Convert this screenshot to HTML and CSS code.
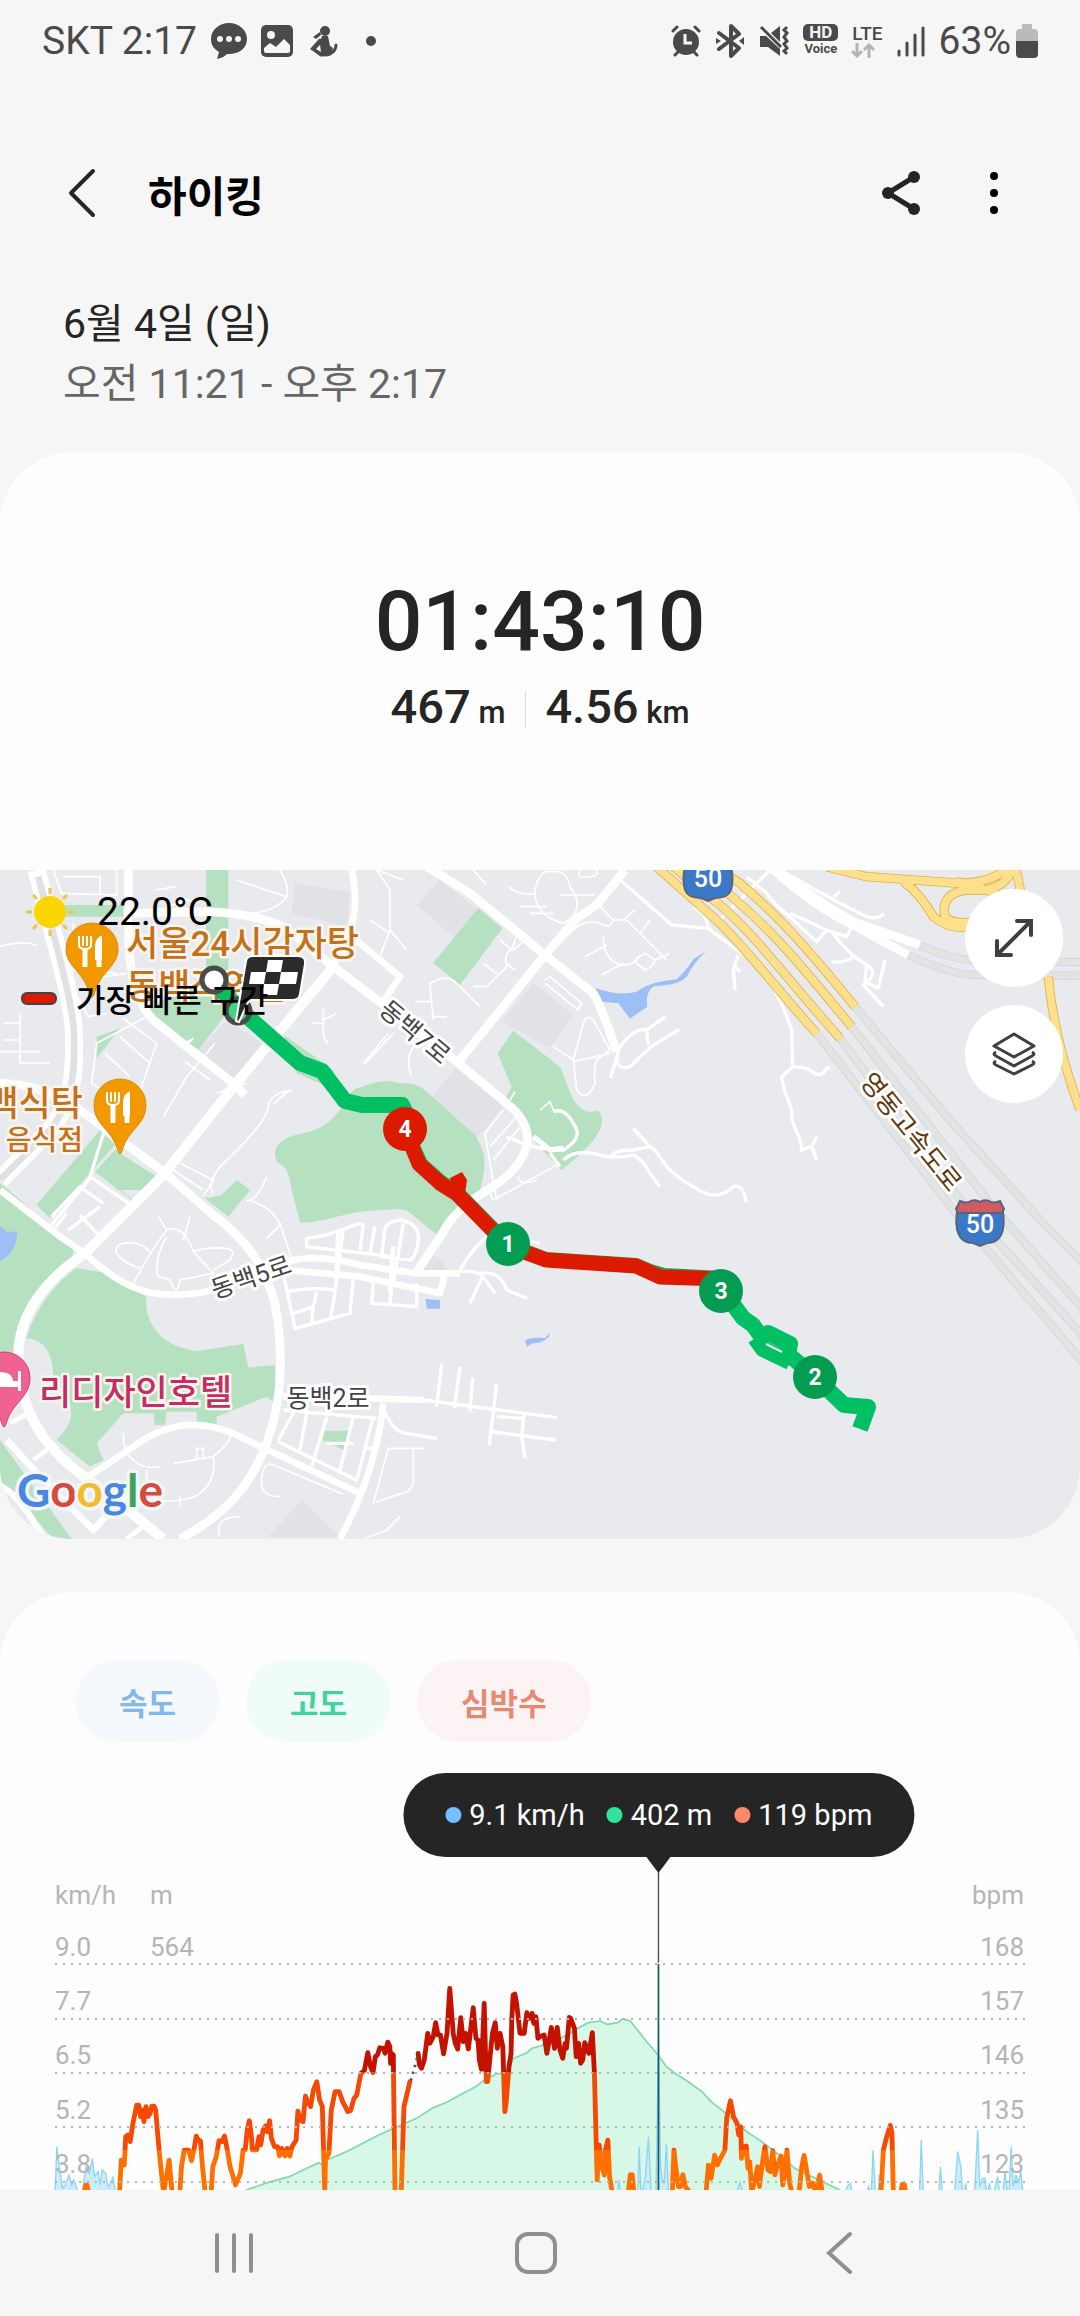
FILE: index.html
```
<!DOCTYPE html>
<html lang="ko">
<head>
<meta charset="UTF-8">
<meta name="viewport" content="width=device-width, initial-scale=1.0">
<title>하이킹</title>
<link rel="stylesheet" href="styles.css">
</head>
<body>
<div class="status-bar">
    <div class="status-left">
        <span class="status-text">SKT 2:17</span>
        <svg width="36" height="38" viewBox="0 0 36 38"><path fill="#4a4a4a" d="M18 1C8 1 0 8 0 17c0 6 3 10 8 13l-2 7c5-1 8-3 10-5h2c10 0 18-6 18-15S28 1 18 1z"/><g fill="#f6f6f6"><circle cx="9" cy="17" r="3"/><circle cx="18" cy="17" r="3"/><circle cx="27" cy="17" r="3"/></g></svg>
        <svg width="32" height="32" viewBox="0 0 32 32"><rect width="32" height="32" rx="5" fill="#4a4a4a"/><circle cx="10" cy="10" r="4" fill="#f6f6f6"/><path fill="#f6f6f6" d="M3 23l6-5 6 4 8-8 6 6v6q0 2-2 2H5q-2 0-2-2z"/></svg>
        <svg class="icon-person" width="28" height="32" viewBox="0 0 28 32"><g fill="#4a4a4a"><circle cx="15" cy="6" r="5"/><path d="M3 12l7-5 1 3-5 4zM12 11h6l2 10 3 2-2 7q-7 3-12 0l-7-5 9-11z"/></g><path d="M2 24l8-9M3 24l8 6M20 29q6-3 6-9" fill="none" stroke="#4a4a4a" stroke-width="3" stroke-linecap="round"/><path fill="#f6f6f6" d="M6 24l4-4 1 7z"/></svg>
        <span class="status-dot"></span>
    </div>
    <div class="status-right">
        <svg width="30" height="32" viewBox="0 0 30 32"><circle cx="15" cy="17" r="13" fill="#4a4a4a"/><path d="M2 6l4-4M28 6l-4-4M4 30l4-4M26 30l-4-4" stroke="#4a4a4a" stroke-width="3" stroke-linecap="round"/><path d="M14 9v9h7" fill="none" stroke="#f6f6f6" stroke-width="3"/></svg>
        <svg width="30" height="34" viewBox="0 0 30 34"><path d="M4 9l20 15-8 8V2l8 8L4 25" fill="none" stroke="#4a4a4a" stroke-width="4" stroke-linejoin="round" stroke-linecap="round"/><path fill="#4a4a4a" d="M1 14l5 3-5 3zM29 13l-5 4 5 4z"/></svg>
        <svg width="30" height="32" viewBox="0 0 30 32"><path fill="#4a4a4a" d="M1 11h6l14 13v7L9 22H1zM12 8l9-7v16z"/><path d="M2 2l20 20M28 2l-3 3 3 3-3 4 3 4-3 3 3 4-3 3 3 3" fill="none" stroke="#4a4a4a" stroke-width="3"/></svg>
        <span class="hd-voice"><b>HD</b><i>Voice</i></span>
        <span class="lte">LTE<svg width="24" height="15" viewBox="0 0 24 15"><path d="M6 0v13M1 8l5 5 5-5M18 15V2M13 7l5-5 5 5" fill="none" stroke="#b4b4b4" stroke-width="3"/></svg></span>
        <svg width="28" height="31" viewBox="0 0 28 31"><path d="M2 25v4M10 17v12M18 9v20M26 2v27" stroke="#4a4a4a" stroke-width="3" stroke-linecap="round"/></svg>
        <span class="status-text">63%</span>
        <svg width="22" height="34" viewBox="0 0 22 34"><path fill="#bababa" d="M7 0h8q1 0 1 1v4h2q4 0 4 4v8H0V9q0-4 4-4h2V1q0-1 1-1z"/><path fill="#4a4a4a" d="M0 17h22v13q0 4-4 4H4q-4 0-4-4z"/></svg>
    </div>
</div>

<header class="app-bar">
    <button class="icon-btn" aria-label="뒤로">
        <svg width="28" height="50" viewBox="0 0 28 50"><path d="M25 3L3 25l22 22" fill="none" stroke="#252525" stroke-width="4" stroke-linecap="round" stroke-linejoin="round"/></svg>
    </button>
    <h1>하이킹</h1>
    <button class="icon-btn share" aria-label="공유">
        <svg width="38" height="44" viewBox="0 0 38 44"><path d="M32 6L6 22l26 16" fill="none" stroke="#252525" stroke-width="5"/><g fill="#252525"><circle cx="32" cy="6" r="6"/><circle cx="6" cy="22" r="6"/><circle cx="32" cy="38" r="6"/></g></svg>
    </button>
    <button class="icon-btn" aria-label="더보기">
        <svg width="10" height="44" viewBox="0 0 10 44"><circle cx="5" cy="5" r="4"/><circle cx="5" cy="22" r="4"/><circle cx="5" cy="39" r="4"/></svg>
    </button>
</header>

<div class="date">
    <p>6월 4일 (일)</p>
    <p class="time-range">오전 11:21 - 오후 2:17</p>
</div>

<section class="card">
    <div class="summary">
        <div class="duration">01:43:10</div>
        <div class="stats">
            <div>467<small> m</small></div>
            <div>4.56<small> km</small></div>
        </div>
    </div>

    <div class="map">
        <svg class="map-canvas" viewBox="0 0 1080 669">
            <svg width="1080" height="669" viewBox="0 0 3240 2007">
                <rect width="3240" height="2007" fill="#e8eaed"/>
                <!-- blocks -->
                <path fill="#e0e2e6" d="M1320 30L1250 105L1365 205L1435 120zM1600 340L1720 435L1650 535L1505 455zM1365 595L1515 705L1425 810L1285 695zM885 40L1050 65L1040 170L875 130zM680 450L800 530L700 630L595 540zM905 1890L1020 2000L805 2000zM1290 1150q50 20 50 70l-90-10z"/>
                <!-- parks -->
                <g fill="#b5e1c1">
                    <path d="M618 0H685V330L640 360L618 300zM180 105H370V140H190zM440 420L560 350L680 360V430L595 540L500 480zM290 500L360 475L290 565z"/>
                    <path d="M850 495L930 550L1000 600L1030 680L960 640L890 610z"/>
                    <path d="M1200 640C1150 625 1120 640 1085 650C1040 660 1050 690 1020 720C960 800 900 780 850 810C820 830 820 860 835 880C860 890 868 910 875 960L900 1058C960 1060 1020 1030 1110 1022C1160 1020 1210 1010 1230 1028L1308 1092L1440 965C1460 880 1460 850 1425 795L1280 665C1250 640 1230 640 1200 640z"/>
                    <path d="M300 780L345 825L150 1045L110 1005zM345 840L470 920L395 990L285 905zM360 960L400 990L440 960zM625 985L665 975L710 930L750 960L685 1040L610 980z"/>
                    <path d="M0 940L50 980L220 1140L215 1185L100 1290L50 1400L40 1500H0z"/>
                    <path d="M230 1195L330 1210L440 1280C430 1340 470 1430 590 1443L730 1422L745 1493L825 1485V1600L800 1580L650 1640V1665H590V1625H500L495 1665H465L460 1630H370L290 1720L310 1770L270 1790L170 1710C230 1650 230 1600 160 1530C160 1460 140 1410 80 1405C100 1330 160 1240 230 1195z"/>
                    <path d="M0 1710L130 1890L215 2007H160L0 1830zM975 1682H1045L1035 1742L968 1710z"/>
                    <path d="M1435 115L1507 175L1380 345L1300 278zM1540 482L1680 590L1720 690Q1745 725 1770 727Q1810 710 1805 760Q1800 810 1685 900L1590 800L1510 700L1535 650L1493 550z"/>
                </g>
                <!-- water -->
                <g fill="#9dbff6">
                    <path d="M1785 354Q1860 380 1910 365Q1950 335 2030 328Q2060 300 2080 268L2118 244Q2080 280 2062 318Q2040 345 1965 348Q1935 360 1942 410L1890 446L1855 400L1805 395zM0 1068L20 1085H52C50 1130 30 1160 0 1172z"/>
                    <path d="M1277 1287L1320 1290V1316H1280zM1575 1412q15-12 60-8l14-14l-2 10q-20 20-50 20l-16 10z"/>
                </g>
                <!-- small streets -->
                <g fill="none" stroke="#fff" stroke-width="5">
                    <path d="M160 0L185 70L350 75V0M190 20H300V75M220 160V300L350 310M250 330L380 310M210 340L265 440L320 430M0 230Q60 210 110 225M10 460H60V510H10M60 430V580M0 545H120M60 580H150"/>
                    <path d="M440 440L290 520L275 640L400 720L470 520L370 445M315 550L390 620M360 500L450 580M490 740L560 620L645 520M555 575L630 630M555 520L580 505L560 525"/>
                    <path d="M650 670L740 640M820 700L870 660M875 660Q810 670 805 710Q800 760 660 890Q620 940 640 970M540 880L640 930L610 980M520 900L610 960M800 920Q770 990 750 990M740 990Q830 1010 850 1090L880 1180M800 1105L845 1060M1090 580L1165 490M970 410V480Q970 510 985 520M935 460H970M970 450L1010 430"/>
                    <path d="M710 30L860 80Q870 50 840 0M860 80Q830 120 760 130M465 60L530 50M500 110L570 90L530 80M1130 0L1170 60V180L1140 260M1170 180L1220 240M1110 150L1170 190M1130 0L1210 30M1420 0L1460 45M1525 50Q1560 80 1610 70M1560 110H1640M1590 130H1660"/>
                    <path d="M1620 20Q1600 50 1607 90Q1620 140 1690 160L1715 145Q1750 100 1710 50Q1700 0 1660 5Q1630 0 1620 20M1740 0Q1730 30 1760 20Q1800 20 1790 0M1680 75H1785M1700 200Q1750 140 1800 160Q1830 180 1840 150L1800 110M1840 150H1880L2000 270M1810 200Q1810 260 1850 280Q1880 295 1910 270M1920 190L1950 150M1755 260L1820 225M1805 315L1870 280M1910 265L1935 250L1965 270L1955 290L1935 300L1910 280zM1965 270L2010 250M1870 150L1905 120"/>
                    <path d="M1555 180L1535 240Q1510 250 1520 290Q1480 330 1460 350H1420M1535 240L1500 210M1450 280L1490 310M1520 280L1545 300M1540 240L1570 215M1300 450Q1290 360 1290 340Q1340 310 1370 340L1440 410M1300 450V440L1340 440M1245 395H1290M1250 520Q1210 560 1235 620M1095 580L1180 490M1635 330L1650 320L1745 400L1735 420L1635 340M1660 530L1720 570L1750 460Q1760 430 1780 450L1830 540L1790 570Q1780 600 1785 640Q1760 700 1730 660L1720 570M1720 575L1830 550"/>
                    <path d="M1620 720L1650 695L1660 720L1680 725M1510 720L1455 790L1480 940L1490 990M1550 740L1470 830M1560 770L1480 870M1480 940Q1460 960 1480 990L1680 880M1555 920Q1560 950 1610 930M1530 690L1545 665"/>
                    <path d="M475 1040L500 1080Q550 1060 580 1145L640 1210L540 1230Q530 1290 510 1230L475 1220Q460 1170 500 1100M500 1080Q460 1130 400 1240M455 1150Q420 1110 370 1120Q340 1130 350 1150Q370 1180 420 1195M580 1145Q620 1130 680 1135Q710 1140 690 1170L640 1200M550 1110L570 1040"/>
                    <path d="M370 1690Q370 1750 400 1770Q430 1800 480 1790M440 1800V1880M520 1780L640 1760Q650 1830 600 1870Q560 1900 440 1890M590 1770V1735H610V1765M640 1760Q690 1720 700 1680M540 1880V1910M840 1880Q780 1880 785 1830Q790 1770 820 1785L1030 1873M660 2000Q640 1940 720 1940M1120 1900L1165 1735H1275M1240 1735V1840Q1240 1850 1220 1865L1130 1895M1090 2007L1160 1980L1200 1940"/>
                </g>
                <g fill="none" stroke="#fff" stroke-width="10">
                    <path d="M155 1040L240 950L310 1000M240 1035L300 1100M205 1080L300 1010M320 760L270 920L400 1010M160 1080L200 1030M270 925L150 1070"/>
                    <path d="M1180 1160L920 1130V1105L980 1095L1080 1060L1090 1065L1080 1140M1110 1150L1125 1070M1145 1155L1155 1075Q1160 1055 1200 1050Q1260 1060 1255 1110Q1250 1160 1230 1170L1140 1160M1030 1080L1000 1300L990 1350M850 1210L885 1375L1050 1330L1060 1220M860 1265Q930 1250 1000 1260M880 1330L940 1310L935 1360M950 1265L940 1310M1120 1240L1115 1300L1250 1310V1240M1175 1250L1170 1300M1210 1060L1180 1240"/>
                    <path d="M1380 1200Q1420 1130 1470 1090L1620 1120M1380 1205Q1430 1200 1450 1220L1485 1270M1450 1215L1410 1300M1440 1210Q1500 1200 1520 1260L1580 1285"/>
                    <path d="M880 1630L835 1710M850 1620L1130 1645M920 1630L900 1740M980 1640L935 1790M1060 1640L1020 1800M835 1715L1070 1830L1120 1640M980 1720H1060M1100 1735H1130"/>
                    <path d="M1150 1615Q1180 1690 1220 1690L1310 1705M1310 1610L1325 1483M1363 1615L1380 1490M1410 1625L1418 1522M1490 1540L1468 1725M1270 1590L1672 1643M1474 1685L1668 1710M1572 1630L1565 1700L1575 1765M1490 1640L1575 1645"/>
                    <path d="M1855 545L1850 570Q1855 600 1890 590Q1930 550 1960 525L2038 478M1850 545Q1900 470 1940 480L1997 440M1940 480L1945 525M1850 560L1832 625M1690 870Q1720 840 1780 850Q1850 870 1900 855Q1930 870 1950 910L1980 950M1835 855Q1850 840 1900 840L1950 830Q1960 830 2000 890Q2040 930 2080 950Q2150 1000 2200 950Q2230 940 2238 995M1950 830L1900 775M1650 850L1680 890M1520 800Q1600 840 1690 840Q1740 810 1730 780Q1700 710 1660 725"/>
                    <path d="M1855 25L2015 165L2125 175L2225 250M2225 250C2280 280 2340 370 2375 480L2378 590L2345 620C2350 680 2380 700 2375 740C2380 780 2405 800 2405 840L2435 830L2450 800M2435 830L2450 872M2375 590Q2410 590 2430 600Q2460 630 2480 595L2490 592M2215 255L2200 300L2205 360M2205 290L2220 305M2160 150L2310 0M2240 20L2300 70Q2320 100 2380 150L2450 215L2480 180L2370 130M2480 180L2540 200L2555 170M2500 190Q2540 250 2600 285L2595 335L2635 355M2600 285Q2640 310 2590 345L2650 410M2635 355L2655 270M2495 275Q2540 280 2560 260M2125 175Q2120 130 2080 110"/>
                    <path d="M2340 0L2520 100L2600 140Q2640 150 2650 130M2500 80L2520 65"/>
                </g>
                <!-- main roads -->
                <g fill="none" stroke="#fff" stroke-width="26" stroke-linejoin="round">
                    <path stroke-width="54" d="M110 0C140 130 225 400 222 500C225 620 215 700 150 780L0 930"/>
                    <path stroke="#e0e1e3" stroke-width="20" d="M115 20C145 140 223 400 222 500C225 620 215 700 150 780L0 930"/>
                    <path d="M385 0V200C390 330 420 410 460 450L560 530L700 640L735 675M0 640Q120 640 240 720L490 905L640 1035C740 1110 790 1180 825 1300C850 1450 850 1580 800 1720C750 1850 680 1930 540 2007"/>
                    <path d="M1000 290L700 650L490 915L255 1150C120 1240 50 1350 55 1470C60 1600 110 1720 260 1825L390 1925L490 2007" stroke-width="30"/>
                    <path d="M400 130L620 125Q760 130 850 170L1000 290L1080 350L1370 575L1520 700Q1595 760 1580 830Q1560 900 1470 955Q1360 1020 1328 1090L1250 1205"/>
                    <path d="M1055 0Q1080 110 1045 190L1000 290M1045 190L1080 220L1200 320L1150 395" stroke-width="20"/>
                    <path d="M1250 -30L1410 70L1635 255L1780 370Q1800 400 1850 545M1875 0L1790 105L1730 145L1635 255L1380 570"/>
                    <path d="M0 960L180 1100L255 1150C380 1270 470 1290 620 1265Q760 1200 860 1175Q950 1150 1080 1185L1250 1210H1380M860 1200L1080 1220L1320 1270L1335 1210" stroke-width="20"/>
                    <path d="M20 1710L130 1830L280 1980L400 1850M250 1830L400 1730Q560 1610 740 1710L1080 1870M1150 1600Q1130 1800 1020 2007M0 1850Q60 1870 130 2007M850 1578L1270 1590" stroke-width="20"/>
                    <path d="M100 1770L140 1740M30 1660L75 1635M380 2007L440 1960M1015 1080L1010 1230M1180 1130L1170 1270" stroke-width="14"/>
                    <path d="M1600 800L1650 840L1690 835" stroke-width="16"/>
                    <path d="M2310 -20Q2440 90 2560 155L2760 225M2310 -10Q2440 110 2560 165Q2640 210 2725 255"/>
                </g>
                <!-- expressways and tunnels -->
                <g fill="none">
                    <g stroke="#cfd2d2" stroke-width="24">
                        <path d="M2760 225Q2840 265 2930 272L3240 276M2725 255Q2840 310 2920 315L3240 317M2565 410L2840 740L3130 1060L3260 1190M2555 470L2970 1000L3260 1330M2520 505L2890 1000L3260 1410M2450 490L2860 1020L3260 1490"/>
                    </g>
                    <g stroke="#e2e3e3" stroke-width="20">
                        <path d="M2760 225Q2840 265 2930 272L3240 276M2725 255Q2840 310 2920 315L3240 317M2565 410L2840 740L3130 1060L3260 1190M2555 470L2970 1000L3260 1330M2520 505L2890 1000L3260 1410M2450 490L2860 1020L3260 1490"/>
                    </g>
                    <g stroke="#e0b04c" stroke-width="28">
                        <path d="M2130 -20L2220 40C2300 110 2370 170 2565 410M2090 -10L2190 75C2300 170 2350 220 2555 470M2020 -10L2160 105C2270 200 2330 290 2520 505M1970 -10L2160 160C2260 260 2340 370 2450 490"/>
                        <path d="M2480 -10L2600 20L2880 40Q2960 40 3020 0M3035 0Q3010 70 2900 60Q2820 70 2835 140Q2860 165 2920 155M2710 35Q2760 70 2800 140Q2850 180 2900 170M3045 -10Q3060 40 3065 100M3145 320Q3160 500 3240 720M2870 35Q2950 50 3000 80"/>
                    </g>
                    <g stroke="#fde08b" stroke-width="23">
                        <path d="M2130 -20L2220 40C2300 110 2370 170 2565 410M2090 -10L2190 75C2300 170 2350 220 2555 470M2020 -10L2160 105C2270 200 2330 290 2520 505M1970 -10L2160 160C2260 260 2340 370 2450 490"/>
                        <path d="M2480 -10L2600 20L2880 40Q2960 40 3020 0M3035 0Q3010 70 2900 60Q2820 70 2835 140Q2860 165 2920 155M2710 35Q2760 70 2800 140Q2850 180 2900 170M3045 -10Q3060 40 3065 100M3145 320Q3160 500 3240 720M2870 35Q2950 50 3000 80"/>
                    </g>
                </g>
            </svg>

            <g class="pin-label food">
                <text x="126" y="86">서울24시감자탕</text>
                <text x="126" y="129">동백직영점</text>
                <text x="83" y="246" text-anchor="end">동백식탁</text>
                <text class="pin-sub" x="83" y="280" text-anchor="end">· 음식점</text>
            </g>
            <text class="pin-label hotel" x="39" y="535">리디자인호텔</text>
            <g class="road-label">
                <text transform="translate(415 162) rotate(40)" y="9">동백7로</text>
                <text transform="translate(251 407) rotate(-19)" y="9">동백5로</text>
                <text transform="translate(328 528)" y="9">동백2로</text>
                <text class="highway-label" transform="translate(911 262) rotate(51)" y="9">영동고속도로</text>
            </g>

            <!-- place pins -->
            <g stroke="#d98a10" stroke-width="1" fill="#f29900">
                <path d="M92 53a26 26 0 0 1 26 26c0 18-18 22-24 46q-2 4-4 0c-6-24-24-28-24-46a26 26 0 0 1 26-26z"/>
                <path d="M120 209a26 26 0 0 1 26 26c0 20-18 24-24 46q-2 6-4 0c-6-22-24-26-24-46a26 26 0 0 1 26-26z"/>
                <path fill="#f06292" stroke="#cf4577" d="M4 482a26 26 0 0 1 26 26c0 20-18 24-24 46q-2 6-4 0c-6-22-24-26-24-46a26 26 0 0 1 26-26z"/>
            </g>
            <g fill="none" stroke="#fff" stroke-width="2">
                <path d="M79 66v9q0 4 6 4t6-4v-9M83 66v10M87 66v10"/><path stroke-width="5" d="M85 78v19M99 88v9"/><path fill="#fff" d="M101 67v22h-5V75q1-6 5-8z"/>
                <path d="M107 222v9q0 4 6 4t6-4v-9M111 222v10M115 222v10"/><path stroke-width="5" d="M113 234v19M127 244v9"/><path fill="#fff" d="M129 223v22h-5v-14q1-6 5-8z"/>
                <path fill="#fff" d="M0 503q12 0 12 9h7v-10h1v18h-1v-4H0z"/>
            </g>

            <!-- shields -->
            <g stroke="#56657d" stroke-width="2">
                <path fill="#3c78c8" d="M685-4h46q3 14 0 24-3 8-16 8l-7 3-7-3q-13 0-16-8-3-10 0-24z"/>
                <path fill="#3c78c8" d="M958 337h44q4 18-1 28-4 8-14 8l-7 3-7-3q-10 0-14-8-5-10-1-28z"/>
                <path fill="#cf5b64" d="M960 331q6 3 11 0 5-2 9 1 4-3 9-1 5 3 11 0l4 8-2 4h-44l-2-4z"/>
            </g>
            <g class="shield-text">
                <text x="708" y="17">50</text>
                <text x="980" y="363">50</text>
            </g>

            <!-- route -->
            <g fill="none" stroke="#00c063" stroke-width="16" stroke-linejoin="round">
                <path d="M216 114L240 140L300 193L322 201L345 231L362 235L402 235L408 247"/>
                <path d="M721 421L735 437L743 448L753 455L760 465M815 507L844 535L868 537L860 559"/>
                <path d="M755 468L768 463L790 474L788 484L815 507M755 468L763 479L790 492"/>
                <path stroke="#2a9a45" stroke-width="14" d="M405 258L421 294L441 312L458 323L509 375L546 389L636 395L650 401L664 405L721 408"/>
                <path stroke="#dc1a00" stroke-width="15" d="M405 260L419 294L441 314L457 324L508 376L546 390L636 396L660 407L721 409"/>
            </g>
            <path fill="#dc1a00" d="M450 308l12-6 5 8-2 14-10 2z"/>
            <path d="M766 474L782 482" stroke="#e8eaed" stroke-width="2"/>
            <g fill="#fff" stroke="#4a4a4a" stroke-width="5">
                <circle cx="214" cy="110" r="12"/>
                <circle cx="238" cy="141" r="12" fill="#3fd488"/>
            </g>
            <path fill="#2b2b2b" stroke="#fff" stroke-width="2" d="M253 86h45q8 0 7 8l-5 30q-1 6-7 6h-44l-10 22-3-1 10-60q1-5 7-5z"/>
            <path fill="#fff" d="M268 90h15l-2 12h-15zM251 102h15l-2 12h-15zM281 102h17l-2 12h-17zM264 114h15l-2 11h-15z"/>
            <circle class="km fast" cx="405" cy="259" r="22"/>
            <circle class="km" cx="508" cy="374" r="22"/>
            <circle class="km" cx="721" cy="421" r="22"/>
            <circle class="km" cx="815" cy="507" r="22"/>
            <g class="km-text">
                <text x="405" y="267">4</text>
                <text x="508" y="382">1</text>
                <text x="721" y="429">3</text>
                <text x="815" y="515">2</text>
            </g>

            <text class="google" x="17" y="637"><tspan fill="#4a87e0">G</tspan><tspan fill="#d64b3f">o</tspan><tspan fill="#f2bd2b">o</tspan><tspan fill="#4a87e0">g</tspan><tspan fill="#3fa35b">l</tspan><tspan fill="#d64b3f">e</tspan></text>
        </svg>

        <div class="map-info">
            <div class="weather">
                <svg width="50" height="50" viewBox="0 0 50 50"><path d="M25 1v6M25 43v6M1 25h6M43 25h6M8 8l4 4M38 38l4 4M8 42l4-4M38 12l4-4" stroke="#e9c54a" stroke-width="3"/><circle cx="25" cy="25" r="16" fill="#fbd500"/></svg>
                <span>22.0°C</span>
            </div>
            <div class="legend"><span class="legend-bar"></span>가장 빠른 구간</div>
        </div>

        <div class="map-buttons">
            <button aria-label="확대">
                <svg width="40" height="40" viewBox="0 0 40 40"><path d="M3 37L37 3M23 3h14v14M3 23v14h14" fill="none" stroke="#3f3f3f" stroke-width="4" stroke-linecap="round"/></svg>
            </button>
            <button aria-label="지도 유형">
                <svg width="44" height="44" viewBox="0 0 44 44"><path d="M22 2l20 12-20 11L2 14zM4 20q-4 2 0 4l18 10 18-10q4-2 0-4M4 29q-4 2 0 4l18 9 18-9q4-2 0-4" fill="none" stroke="#3f3f3f" stroke-width="3" stroke-linejoin="round"/></svg>
            </button>
        </div>
    </div>
</section>

<section class="card chart-card">
    <div class="chips">
        <button class="chip speed">속도</button>
        <button class="chip altitude">고도</button>
        <button class="chip heart">심박수</button>
    </div>

    <div class="chart">
        <svg class="chart-canvas" viewBox="0 0 1080 417">
            <defs>
                <linearGradient id="zones" gradientUnits="userSpaceOnUse" x1="0" y1="0" x2="0" y2="1000">
                    <stop offset="0.457" stop-color="#c41200"/>
                    <stop offset="0.457" stop-color="#f24a08"/>
                    <stop offset="0.69" stop-color="#f84800"/>
                    <stop offset="0.69" stop-color="#ff7000"/>
                </linearGradient>
            </defs>
            <svg width="1080" height="417" viewBox="0 -441 3136 1251" preserveAspectRatio="none">
                <!-- altitude -->
                <path fill="#d7f8e6" stroke="#7fd9ae" stroke-width="5" d="M700 820L715 810L780 787L840 770L925 728L935 735L950 720L1010 693L1100 645L1150 622L1180 608L1210 595L1255 565L1300 545L1330 528L1385 498L1400 485L1440 462L1455 460L1480 440L1490 415L1510 407L1530 398L1545 385L1568 378L1600 365L1628 355L1678 325L1708 308L1743 303L1763 313L1793 308L1808 297L1830 303L1878 365L1913 408L1935 440L1963 462L1998 485L2038 515L2068 548L2108 580L2168 635L2208 662L2268 710L2308 745L2368 775L2438 810L2450 820z"/>
                <!-- speed -->
                <g fill="#c9edfb" stroke="#90d6f3" stroke-width="4">
                    <path d="M160 820L165 680L172 740L175 760L182 805L190 795L200 765L208 795L214 780L222 800L225 820zM238 820L250 740L260 760L268 715L275 770L285 755L291 795L297 750L307 760L312 795L316 800L322 785L328 772L336 820z"/>
                    <path d="M1793 820L1797 780L1801 820zM1852 820L1856 680L1861 820zM1865 820L1874 770L1883 650L1891 820zM1905 820L1912 350L1918 740L1924 790L1930 775L1935 670L1941 820zM2138 820L2148 787L2157 820zM2454 820L2460 800L2464 795L2470 790L2474 820zM2516 820L2522 800L2528 820zM2530 820L2535 690L2542 820zM2550 820L2553 765L2557 820zM2670 820L2675 660L2681 820zM2726 820L2731 740L2736 820zM2772 820L2781 695L2790 740L2795 820zM2800 820L2804 790L2808 820zM2830 820L2839 630L2845 800L2852 775L2860 775L2865 820zM2868 820L2873 790L2878 820zM2885 820L2897 770L2902 820zM2912 820L2918 755L2926 820zM2930 820L2936 680L2942 800L2950 765L2957 790L2964 755L2970 820z"/>
                </g>
                <!-- heart rate -->
                <g fill="none" stroke="url(#zones)" stroke-width="14" stroke-linejoin="round" stroke-linecap="round">
                    <path d="M245 820L249 795H253L257 820M347 820L352 720L361 735L365 650L372 645L378 665L386 610L397 555H403L408 590L413 570L418 605L424 560L430 590L436 580L441 558H447L452 570L462 690L475 820L485 760L491 720L500 820M522 820L527 740L535 690H548L556 722L563 690L570 648L576 660L582 662L588 740L596 820M613 820L618 740L628 710L636 662L645 665L652 648L660 690L668 740L684 795L698 760L706 690H712L718 630L724 602L729 640L733 690H745L752 650L757 675L764 630L771 618L776 635L783 602L788 655L797 680H806L812 708L818 685L828 708L834 685L842 708L848 680L860 660L865 573L872 600L880 605L887 528L893 545L902 560L910 510L920 485L928 540L936 560L943 820L945 720L955 700L962 570L973 515H985L995 545L1010 575L1018 572L1028 535L1036 525L1048 460L1058 452L1068 398L1076 440L1083 458L1090 410L1096 405L1103 383L1113 385L1118 400L1126 366L1132 380L1134 430L1137 400L1142 405L1147 820H1165L1173 560L1180 530L1190 485"/>
                    <path d="M1214 400L1218 435L1224 445L1232 420L1242 340L1248 370L1258 350L1265 308L1272 345H1279L1288 402L1298 340L1306 205L1316 340L1322 370L1329 387L1338 293L1345 365L1352 340L1360 387L1374 263L1382 355L1388 360L1392 420L1398 448L1406 250L1412 485H1416L1424 400L1430 340L1438 308L1444 385L1452 340L1460 380L1466 575L1470 545L1478 440L1484 400L1486 300L1490 225L1495 222L1500 250L1510 340H1522L1530 278L1537 295L1545 280L1550 310L1556 290L1562 355L1568 350L1580 345L1588 400L1601 322L1610 385L1618 322L1626 390L1634 415L1641 370L1645 385L1653 292L1657 295L1668 325L1673 410L1680 370L1686 430L1692 420L1698 368L1710 400L1720 338L1726 460L1734 780L1740 675L1748 740L1755 765L1758 690L1765 660L1770 770L1778 820"/>
                    <path d="M1824 820L1830 764H1836L1841 820M1952 820L1957 690L1962 740L1970 800H1976L1983 764L1990 800L2006 820M2050 820L2057 735L2065 775L2075 705L2083 735L2092 715L2105 690L2110 595L2121 542L2130 590L2140 610L2145 645L2151 620L2153 715L2160 680L2167 678L2172 745L2177 725L2183 820L2200 740L2205 800L2213 735L2221 680L2230 750L2237 755L2244 692L2250 765L2258 735L2268 708L2273 795L2279 760L2285 690L2293 790L2300 820M2320 820L2328 740L2335 706L2342 750L2350 800L2360 790L2370 820L2380 765L2388 820M2558 820L2565 690L2575 650L2585 616L2590 640L2594 820M2615 820L2620 793H2626L2630 820"/>
                </g>
                <path d="M1193 482L1215 400" stroke="#555" stroke-width="8" stroke-dasharray="7 14"/>
                <path d="M1912 132V820" stroke="#1b5866" stroke-width="5"/>
                <path d="M1912 -144V128" stroke="#4a4a4a" stroke-width="4"/>
            </svg>
            <path class="grid" d="M55 191H1025M55 246H1025M55 300H1025M55 354H1025M55 409H1025"/>
            <g class="axis">
                <text x="55" y="131">km/h</text>
                <text x="55" y="183">9.0</text>
                <text x="55" y="237">7.7</text>
                <text x="55" y="291">6.5</text>
                <text x="55" y="346">5.2</text>
                <text x="55" y="400">3.8</text>
                <text x="150" y="131">m</text>
                <text x="150" y="183">564</text>
            </g>
            <g class="axis axis-right">
                <text x="1024" y="131">bpm</text>
                <text x="1024" y="183">168</text>
                <text x="1024" y="237">157</text>
                <text x="1024" y="291">146</text>
                <text x="1024" y="346">135</text>
                <text x="1024" y="400">123</text>
            </g>
        </svg>
        <div class="tooltip">
            <span class="value speed">9.1 km/h</span>
            <span class="value altitude">402 m</span>
            <span class="value heart">119 bpm</span>
        </div>
    </div>
</section>

<nav class="nav-bar">
    <button aria-label="최근 앱">
        <svg width="40" height="42" viewBox="0 0 40 42"><path d="M3 3v36M20 3v36M37 3v36" stroke="#8f8f8f" stroke-width="4" stroke-linecap="round"/></svg>
    </button>
    <button aria-label="홈">
        <svg width="42" height="42" viewBox="0 0 42 42"><rect x="2" y="2" width="38" height="38" rx="11" fill="none" stroke="#8f8f8f" stroke-width="4"/></svg>
    </button>
    <button aria-label="뒤로">
        <svg width="26" height="44" viewBox="0 0 26 44"><path d="M24 3L3 22l21 19" fill="none" stroke="#8f8f8f" stroke-width="4" stroke-linecap="round"/></svg>
    </button>
</nav>
</body>
</html>
```
FILE: styles.css
```
* {
    box-sizing: border-box;
}
body {
    margin: 0;
    background-color: #f6f6f6;
    color: #252525;
    font-family: Roboto, "Noto Sans CJK KR", sans-serif;
}
button {
    border: none;
    padding: 0;
    background: none;
    font-family: inherit;
    cursor: pointer;
}
svg {
    flex: none;
}

/* status bar */
.status-bar {
    display: flex;
    justify-content: space-between;
    align-items: center;
    height: 82px;
    padding: 0 42px;
    color: #4a4a4a;
}
.status-left,
.status-right {
    display: flex;
    align-items: center;
    gap: 14px;
}
.status-text {
    font-size: 39px;
}
.icon-person {
    margin-left: 3px;
}
.status-dot {
    width: 10px;
    height: 10px;
    margin-left: 14px;
    border-radius: 50%;
    background-color: #4a4a4a;
}
.status-right svg:last-child {
    margin-left: -9px;
}
.hd-voice,
.lte {
    display: flex;
    flex-direction: column;
    align-items: center;
    height: 34px;
}
.hd-voice b {
    width: 35px;
    border-radius: 5px;
    background-color: #4a4a4a;
    color: #f6f6f6;
    font-size: 17px;
    line-height: 17px;
    text-align: center;
}
.hd-voice i {
    font-size: 13px;
    font-style: normal;
    font-weight: 700;
    line-height: 16px;
}
.lte {
    font-size: 19px;
    font-weight: 500;
    line-height: 19px;
}

/* app bar */
.app-bar {
    display: flex;
    align-items: center;
    height: 178px;
    margin-top: 22px;
    padding: 0 81px 0 68px;
}
.app-bar h1 {
    flex: 1;
    margin: 0 0 0 52px;
    color: #000;
    font-size: 42px;
    font-weight: 700;
}
.icon-btn {
    display: flex;
}
.share {
    margin-right: 69px;
}

.date {
    padding: 12px 63px 38px;
    font-size: 41px;
    line-height: 60px;
}
.date p {
    margin: 0;
}
.date .time-range {
    color: #666;
}

/* cards */
.card {
    overflow: hidden;
    border-radius: 72px;
    background-color: #fdfdfd;
}
.summary {
    padding: 120px 0 127px;
    font-weight: 500;
    text-align: center;
}
.duration {
    font-size: 84px;
    line-height: 100px;
}
.stats {
    display: flex;
    justify-content: center;
    margin-top: 5px;
    font-size: 47px;
    line-height: 60px;
}
.stats div {
    padding: 0 20px;
}
.stats div + div {
    background: linear-gradient(#dcdcdc, #dcdcdc) left center / 1px 38px no-repeat;
}
.stats small {
    font-size: 31px;
}

/* map */
.map {
    position: relative;
}
.map-canvas,
.chart-canvas {
    display: block;
    width: 100%;
}
.map text {
    font-family: Roboto, "Noto Sans CJK KR", sans-serif;
    paint-order: stroke;
    stroke-linejoin: round;
}
.pin-label {
    font-size: 35px;
    font-weight: 500;
    stroke: #fbf6f0;
    stroke-width: 5px;
}
.food {
    fill: #c5701b;
}
.hotel {
    fill: #c42e62;
}
.pin-sub {
    font-size: 28px;
}
.road-label {
    fill: #444;
    font-size: 25px;
    text-anchor: middle;
    stroke: #fff;
    stroke-width: 6px;
}
.highway-label {
    fill: #5f3509;
    font-size: 26px;
}
.shield-text {
    fill: #fff;
    font-size: 25px;
    font-weight: 500;
    text-anchor: middle;
}
.km {
    fill: #049c52;
}
.km.fast {
    fill: #dc1a00;
}
.km-text {
    fill: #fff;
    font-size: 23px;
    font-weight: 700;
    text-anchor: middle;
}
.map .google {
    font-family: Lato, sans-serif;
    font-size: 46px;
    font-weight: 700;
    stroke: #f3f5f7;
    stroke-width: 7px;
}
.map-info {
    position: absolute;
    top: 14px;
    left: 21px;
    color: #000;
}
.weather {
    display: flex;
    align-items: center;
    gap: 22px;
    height: 56px;
    margin-left: 4px;
    font-size: 39px;
}
.legend {
    display: flex;
    align-items: center;
    gap: 19px;
    height: 56px;
    margin-top: 30px;
    font-size: 32px;
    font-weight: 500;
}
.legend-bar {
    width: 36px;
    height: 13px;
    border: 2px solid #444;
    border-radius: 6px;
    background-color: #dc1a00;
}
.map-buttons {
    position: absolute;
    top: 19px;
    right: 17px;
    display: grid;
    gap: 18px;
}
.map-buttons button {
    display: flex;
    align-items: center;
    justify-content: center;
    width: 98px;
    height: 98px;
    border-radius: 50%;
    background-color: #fff;
}

/* chart */
.chart-card {
    margin-top: 53px;
    padding-top: 68px;
    border-radius: 72px 72px 0 0;
}
.chips {
    display: flex;
    gap: 26px;
    padding: 0 75px;
}
.chip {
    height: 82px;
    padding: 0 44px;
    border-radius: 41px;
    font-size: 31px;
    font-weight: 700;
}
.chip.speed {
    background-color: #f5f9fe;
    color: #80b9ea;
}
.chip.altitude {
    background-color: #f0fcf8;
    color: #42d29d;
}
.chip.heart {
    background-color: #fcf4f4;
    color: #e98870;
}
.chart {
    position: relative;
    margin-top: 31px;
}
.grid {
    fill: none;
    stroke: #b5b5b5;
    stroke-width: 2px;
    stroke-dasharray: 2 6;
}
.axis {
    fill: #b5b5b5;
    font-size: 26px;
}
.axis-right {
    text-anchor: end;
}
.tooltip {
    position: absolute;
    top: 0;
    left: 61%;
    display: flex;
    gap: 22px;
    height: 84px;
    padding: 0 42px;
    border-radius: 42px;
    background-color: #252525;
    color: #fff;
    font-size: 29px;
    line-height: 88px;
    white-space: nowrap;
    transform: translateX(-50%);
}
.tooltip::after {
    content: "";
    position: absolute;
    top: 100%;
    left: 50%;
    border: 12px solid transparent;
    border-top: 16px solid #252525;
    border-bottom: none;
    transform: translateX(-50%);
}
.value {
    display: flex;
    align-items: center;
    gap: 8px;
}
.value::before {
    content: "";
    width: 16px;
    height: 16px;
    border-radius: 50%;
}
.value.speed::before {
    background-color: #74bfff;
}
.value.altitude::before {
    background-color: #30e399;
}
.value.heart::before {
    background-color: #ff876c;
}

/* navigation bar */
.nav-bar {
    display: grid;
    grid-template-columns: repeat(3, 1fr);
    height: 126px;
    padding: 0 90px 0 83px;
    background-color: #f6f6f6;
}
.nav-bar button {
    display: flex;
    align-items: center;
    justify-content: center;
}
```
